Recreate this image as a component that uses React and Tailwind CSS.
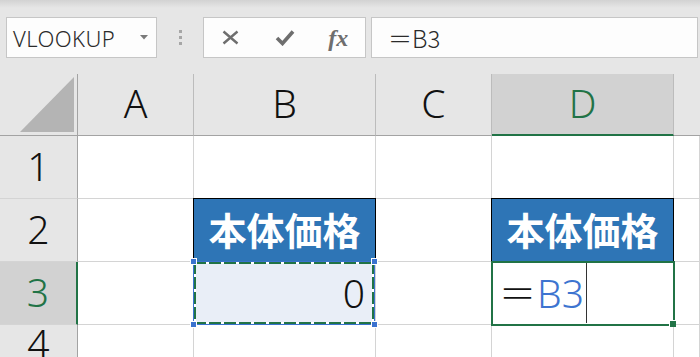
import React from 'react';

const latin = { fontFamily: '"Noto Sans", "Noto Sans CJK JP", sans-serif' };
const cjk = { fontFamily: '"Noto Sans CJK JP", sans-serif' };

// column header cell
function ColHead({ label, active }) {
  return (
    <div
      className={
        'flex items-center justify-center border-r border-r-[#bcbcbc] text-[39px] font-light leading-none pb-[4px] ' +
        (active
          ? 'bg-[#d2d2d2] text-[#217346] border-b-2 border-b-[#217346]'
          : 'bg-[#e6e6e6] text-[#111] border-b border-b-[#a3a3a3]')
      }
      style={latin}
    >
      {label}
    </div>
  );
}

// row header cell
function RowHead({ label, active }) {
  return (
    <div
      className={
        'flex items-center justify-center border-b border-b-[#d4d4d4] text-[39px] font-light leading-none pb-[4px] ' +
        (active
          ? 'bg-[#d2d2d2] text-[#217346] border-r-2 border-r-[#217346]'
          : 'bg-[#e6e6e6] text-[#111] border-r border-r-[#a3a3a3]')
      }
      style={latin}
    >
      {label}
    </div>
  );
}

function Cell({ className = '', children }) {
  return <div className={'border-r border-b border-[#d4d4d4] bg-white ' + className}>{children}</div>;
}

function Handle({ className }) {
  return <div className={'absolute w-[7px] h-[7px] bg-[#3a72cf] border border-white ' + className} />;
}

export default function App() {
  return (
    <div className="w-[700px] h-[357px] overflow-hidden bg-white select-none">
      {/* formula bar area */}
      <div className="h-[74px] bg-[linear-gradient(#d2d2d2,#e6e6e6_8px)] pt-[17px] flex items-start">
        <div className="ml-[6px] w-[151px] h-[41px] bg-[#fdfdfd] border border-[#c6c6c6] flex items-center pl-[6px] pr-[8px]">
          <span className="text-[22px] font-light text-[#2b2b2b] leading-none tracking-[0.4px]" style={latin}>VLOOKUP</span>
          <svg className="ml-auto" width="8" height="5" viewBox="0 0 8 5">
            <polygon points="0,0 8,0 4,4.5" fill="#7a7a7a" />
          </svg>
        </div>
        <div className="w-[46px] h-[41px] flex flex-col items-center justify-center gap-[3px] pl-[1px]">
          <div className="w-[3px] h-[3px] bg-[#a6a6a6]" />
          <div className="w-[3px] h-[3px] bg-[#a6a6a6]" />
          <div className="w-[3px] h-[3px] bg-[#a6a6a6]" />
        </div>
        <div className="w-[163px] h-[41px] bg-[#fdfdfd] border border-[#c6c6c6] flex items-center">
          <div className="w-[54px] flex justify-center">
            <svg width="17" height="15" viewBox="0 0 17 15">
              <path d="M1.5 1.5 L15.5 13.5 M15.5 1.5 L1.5 13.5" stroke="#6e6e6e" strokeWidth="2.4" fill="none" />
            </svg>
          </div>
          <div className="w-[54px] flex justify-center">
            <svg width="20" height="17" viewBox="0 0 20 17">
              <path d="M2 9 L7.5 14.5 L18 2.5" stroke="#6e6e6e" strokeWidth="3.6" fill="none" strokeLinejoin="miter" />
            </svg>
          </div>
          <div className="w-[54px] flex justify-center">
            <span className="italic text-[24px] leading-none text-[#6e6e6e] font-semibold" style={{ fontFamily: '"Liberation Serif", serif' }}>
              fx
            </span>
          </div>
        </div>
        <div className="ml-[5px] w-[327px] h-[41px] bg-[#fdfdfd] border border-[#c6c6c6] flex items-center pl-[16px]">
          <span className="text-[24px] font-light leading-none text-[#2b2b2b]" style={cjk}>＝B3</span>
        </div>
      </div>

      {/* sheet grid */}
      <div className="grid grid-cols-[78px_116px_182px_116px_182px_1fr] grid-rows-[62px_63px_63px_63px_40px]">
        {/* header row */}
        <div className="bg-[#e6e6e6] border-r border-r-[#a3a3a3] border-b border-b-[#a3a3a3] flex items-end justify-end pr-[3px] pb-[3px]">
          <svg width="54" height="55" viewBox="0 0 54 55">
            <polygon points="0,55 54,0 54,55" fill="#b4b4b4" />
          </svg>
        </div>
        <ColHead label="A" />
        <ColHead label="B" />
        <ColHead label="C" />
        <ColHead label="D" active />
        <div className="bg-[#e6e6e6] border-b border-b-[#a3a3a3]" />

        {/* row 1 */}
        <RowHead label="1" />
        <Cell />
        <Cell />
        <Cell />
        <Cell />
        <Cell />

        {/* row 2 */}
        <RowHead label="2" />
        <Cell />
        <div
          className="-ml-px -mt-px border border-black bg-[#2e75b6] text-white font-bold text-[38px] leading-none flex items-center justify-center pb-[2px]"
          style={cjk}
        >
          本体価格
        </div>
        <Cell />
        <div
          className="-ml-px -mt-px border border-black bg-[#2e75b6] text-white font-bold text-[38px] leading-none flex items-center justify-center pb-[2px]"
          style={cjk}
        >
          本体価格
        </div>
        <Cell />

        {/* row 3 */}
        <RowHead label="3" active />
        <Cell />
        <div className="relative border-r border-b border-[#d4d4d4] bg-[#e9eef7] flex items-center justify-end pr-[10px] pb-[2px]">
          <span className="text-[39px] font-light leading-none text-[#111]" style={latin}>0</span>
          {/* copy marquee */}
          <div className="absolute -left-px -top-px right-0 -bottom-px border border-[#3a72cf] z-10">
            <div className="absolute left-0 right-0 top-0 h-[2px] bg-[repeating-linear-gradient(90deg,#217346_0_12px,#ffffff_12px_15px)]" />
            <div className="absolute left-0 right-0 bottom-0 h-[2px] bg-[repeating-linear-gradient(90deg,#217346_0_12px,#ffffff_12px_15px)]" />
            <div className="absolute top-0 bottom-0 left-0 w-[2px] bg-[repeating-linear-gradient(180deg,#217346_0_12px,#ffffff_12px_15px)]" />
            <div className="absolute top-0 bottom-0 right-0 w-[2px] bg-[repeating-linear-gradient(180deg,#217346_0_12px,#ffffff_12px_15px)]" />
            <Handle className="-left-[4px] -top-[4px]" />
            <Handle className="-left-[4px] -bottom-[4px]" />
            <Handle className="-right-[4px] -top-[4px]" />
            <Handle className="-right-[4px] -bottom-[4px]" />
          </div>
        </div>
        <Cell />
        <div className="relative border-r border-b border-[#d4d4d4] bg-white flex items-center pl-[7px] pb-[2px]">
          <span className="text-[37px] font-light leading-none text-[#111]" style={cjk}>＝</span>
          <span className="text-[39px] font-light leading-none text-[#3d74d0] ml-[1px]" style={latin}>B3</span>
          <div className="w-px self-stretch bg-[#333] ml-[2px] -mb-[1px]" />
          {/* active cell */}
          <div className="absolute -left-px -top-px -right-[2px] -bottom-[2px] border-2 border-[#217346] z-10" />
          <div className="absolute -right-[3px] -bottom-[3px] w-[7px] h-[7px] bg-[#217346] border-l border-t border-white z-20" />
        </div>
        <Cell />

        {/* row 4 */}
        <RowHead label="4" />
        <Cell />
        <Cell />
        <Cell />
        <Cell />
        <Cell />
      </div>
    </div>
  );
}
